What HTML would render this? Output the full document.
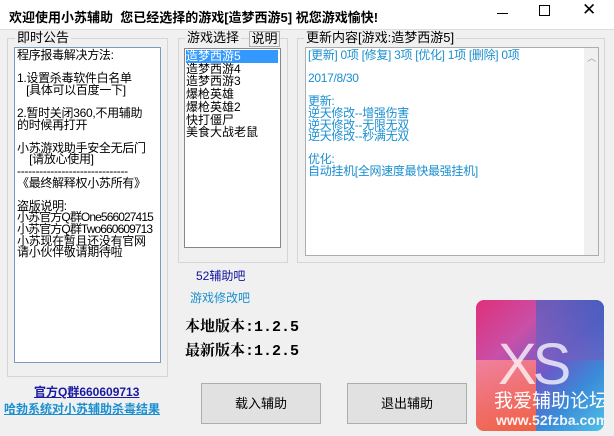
<!DOCTYPE html>
<html><head><meta charset="utf-8"><style>
*{margin:0;padding:0;box-sizing:border-box}
body{width:614px;height:436px;background:#f0f0f0;font-family:"Liberation Sans","Noto Sans CJK SC","WenQuanYi Zen Hei",sans-serif;font-size:12px;color:#000;position:relative;overflow:hidden}
.a{position:absolute;white-space:nowrap}
.title{left:0;top:0;width:614px;height:30px;background:#fff;border-bottom:1px solid #ddd}
.gb{position:absolute;border:1px solid #d5d5d5;}
.lbl{position:absolute;background:#f0f0f0;padding:0 2px;font-size:13px;line-height:14px}
.box{position:absolute;background:#fff;border:1px solid #7a9cc2;white-space:nowrap;overflow:hidden}
.t{font-size:12px;line-height:11.6px;letter-spacing:-0.3px}
.btn{position:absolute;border:1px solid #adadad;background:#e1e1e1;text-align:center;font-size:13px}
.n{letter-spacing:-0.9px}
</style></head><body>
<div class="a title"></div>
<div class="a" style="left:9px;top:7px;font-size:13px;font-weight:bold">欢迎使用小苏辅助&nbsp;&nbsp;您已经选择的游戏[造梦西游5] 祝您游戏愉快!</div>
<div class="a" style="left:497px;top:13px;width:11px;height:1px;background:#000"></div>
<div class="a" style="left:539px;top:5px;width:11px;height:11px;border:1px solid #000"></div>
<div class="a" style="left:582px;top:0px;font-size:17px;line-height:20px">✕</div>

<div class="gb" style="left:7px;top:38px;width:161px;height:339px"></div>
<div class="lbl" style="left:15px;top:31px">即时公告</div>
<div class="box t" style="left:14px;top:47px;width:147px;height:316px;padding:2px 2px">
程序报毒解决方法:<br><br>1.设置杀毒软件白名单<br>&nbsp;&nbsp;&nbsp;[具体可以百度一下]<br><br>2.暂时关闭360,不用辅助<br>的时候再打开<br><br>小苏游戏助手安全无后门<br>&nbsp;&nbsp;&nbsp;&nbsp;[请放心使用]<br>------------------------------<br>《最终解释权小苏所有》<br><br>盗版说明:<br><span class="n">小苏官方Q群One566027415</span><br><span class="n">小苏官方Q群Two660609713</span><br>小苏现在暂且还没有官网<br>请小伙伴敬请期待啦
</div>

<div class="gb" style="left:178px;top:38px;width:110px;height:225px"></div>
<div class="lbl" style="left:185px;top:31px">游戏选择</div>
<div class="btn" style="left:249px;top:31px;width:31px;height:16px;line-height:14px;background:#f0f0f0">说明</div>
<div class="box" style="left:184px;top:48px;width:97px;height:200px;border-color:#828790;padding:1px 1px;font-size:12px;line-height:12.7px">
<div style="background:#3399ff;color:#fff;width:92px">造梦西游5</div>造梦西游4<br>造梦西游3<br>爆枪英雄<br>爆枪英雄2<br>快打僵尸<br>美食大战老鼠
</div>

<div class="gb" style="left:297px;top:38px;width:308px;height:225px"></div>
<div class="lbl" style="left:304px;top:31px">更新内容[游戏:造梦西游5]</div>
<div class="box t" style="left:305px;top:47px;width:294px;height:209px;border-color:#abadb3;color:#1a8fd0;padding:2px 2px">
[更新] 0项 [修复] 3项 [优化] 1项 [删除] 0项<br><br>2017/8/30<br><br>更新:<br>逆天修改--增强伤害<br>逆天修改--无限无双<br>逆天修改--秒满无双<br><br>优化:<br>自动挂机[全网速度最快最强挂机]
<div class="a" style="left:278px;top:0;width:15px;height:207px;background:#f0f0f0;color:#999;text-align:center;font-size:9px;line-height:20px">︿</div>
</div>

<div class="a" style="left:196px;top:267px;color:#1010a0">52辅助吧</div>
<div class="a" style="left:190px;top:289px;color:#1a8fd0">游戏修改吧</div>
<div class="a" style="left:185px;top:315px;font-size:15px;font-weight:bold;font-family:'Liberation Mono','Noto Serif CJK SC',monospace">本地版本:1.2.5</div>
<div class="a" style="left:185px;top:339px;font-size:15px;font-weight:bold;font-family:'Liberation Mono','Noto Serif CJK SC',monospace">最新版本:1.2.5</div>

<div class="a" style="left:34px;top:383px;color:#1a1aa0;font-weight:bold;text-decoration:underline">官方Q群660609713</div>
<div class="a" style="left:4px;top:400px;color:#1a8fd0;font-weight:bold;text-decoration:underline">哈勃系统对小苏辅助杀毒结果</div>

<div class="btn" style="left:201px;top:383px;width:120px;height:41px;line-height:39px">载入辅助</div>
<div class="btn" style="left:347px;top:383px;width:120px;height:41px;line-height:39px">退出辅助</div>

<div class="a" style="left:476px;top:300px;width:128px;height:131px;border-radius:8px;overflow:hidden;background:linear-gradient(135deg,#e0307a 0%,#c850a8 30%,#6a5ac8 55%,#3a8ad8 75%,#50c0e8 100%)">
<div class="a" style="left:0;top:60px;width:60px;height:71px;background:linear-gradient(160deg,#f080a0,#f06040)"></div>
<div class="a" style="left:60px;top:0;width:68px;height:60px;background:linear-gradient(200deg,#3060c0,#8060c0);opacity:.7"></div>
<div class="a" style="left:22px;top:35px;font-size:58px;line-height:60px;color:#fff;opacity:.75;font-weight:100;letter-spacing:-4px">XS</div>
<div class="a" style="left:18px;top:86px;font-size:19px;color:#fff">我爱辅助论坛</div>
<div class="a" style="left:20px;top:112px;font-size:14px;font-weight:bold;color:#fff;opacity:.9">www.52fzba.com</div>
</div>
</body></html>
